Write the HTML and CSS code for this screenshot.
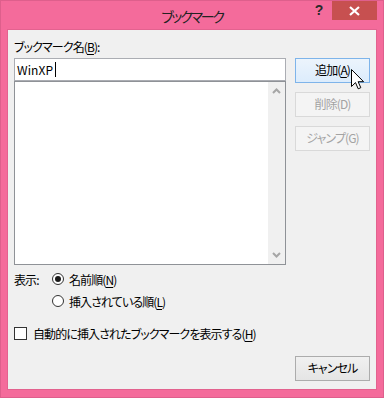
FILE: index.html
```html
<!DOCTYPE html>
<html lang="ja">
<head>
    <meta charset="UTF-8">
    <title>ブックマーク</title>
    <link rel="stylesheet" href="styles.css">
</head>
<body>

    <div class="window">
        <!-- Title bar -->
        <div class="titlebar">
            <div></div>
            <div class="title">ブックマーク</div>
            <div class="controls">
                <div class="help">?</div>
                <div class="close">
                    <svg width="11" height="10" viewBox="0 0 11 10">
                        <path d="M1 1 L10 9 M10 1 L1 9" stroke="#fff" stroke-width="2.2"/>
                    </svg>
                </div>
            </div>
        </div>

        <div class="client">
            <div class="main">
                <div class="left">
                    <div class="label">ブックマーク名(<u>B</u>):</div>
                    <div class="textbox"><span>WinXP</span><span class="caret"></span></div>
                    <div class="listbox">
                        <div class="list-area"></div>
                        <div class="scrollbar">
                            <svg width="9" height="6" viewBox="0 0 9 6">
                                <path d="M1 5 L4.5 1.5 L8 5" fill="none" stroke="#a6a6a6" stroke-width="2"/>
                            </svg>
                            <svg width="9" height="6" viewBox="0 0 9 6">
                                <path d="M1 1 L4.5 4.5 L8 1" fill="none" stroke="#a6a6a6" stroke-width="2"/>
                            </svg>
                        </div>
                    </div>
                </div>
                <div class="right">
                    <div class="button focused">追加(<u>A</u>)</div>
                    <div class="button disabled">削除(D)</div>
                    <div class="button disabled">ジャンプ(G)</div>
                </div>
            </div>

            <div class="options">
                <div class="opt-label">表示:</div>
                <div class="radio-item">
                    <span class="radio checked"></span>
                    <span>名前順(<u>N</u>)</span>
                </div>
                <div></div>
                <div class="radio-item">
                    <span class="radio"></span>
                    <span>挿入されている順(<u>L</u>)</span>
                </div>
            </div>

            <div class="check-row">
                <span class="checkbox"></span>
                <span>自動的に挿入されたブックマークを表示する(<u>H</u>)</span>
            </div>

            <div class="footer">
                <div class="button">キャンセル</div>
            </div>
        </div>

        <!-- mouse pointer over the Add button -->
        <svg class="pointer" width="14" height="22" viewBox="0 0 14 22">
            <path d="M0.5 0.5 L0.5 17.5 L4.5 13.6 L7.2 19.8 L9.8 18.7 L7.1 12.7 L12.6 12.7 Z" fill="#fff" stroke="#000" stroke-width="1"/>
        </svg>
    </div>

</body>
</html>
```

FILE: styles.css
```css
body {
    margin: 0;
    font-family: "Noto Sans CJK JP", "Noto Sans", sans-serif;
    font-feature-settings: "palt";
    font-size: 12px;
    letter-spacing: -0.9px;
    color: #000;
}
u {
    text-decoration-thickness: 1px;
    text-underline-offset: 2px;
}
.window {
    position: relative;
    width: 384px;
    height: 398px;
    box-sizing: border-box;
    background-color: #f46b9b;
    border: 1px solid #de5f8c;
    display: flex;
    flex-direction: column;
}
.titlebar {
    height: 29px;
    padding: 0 6px;
    display: grid;
    grid-template-columns: 1fr auto 1fr;
}
.title {
    font-size: 14px;
    letter-spacing: -2.2px;
    line-height: 30px;
    color: #222;
}
.controls {
    display: flex;
    justify-content: flex-end;
    align-items: flex-start;
}
.help {
    width: 26px;
    height: 19px;
    line-height: 19px;
    text-align: center;
    font-family: "Liberation Sans", sans-serif;
    font-weight: bold;
    font-size: 14px;
    letter-spacing: 0;
    color: #2a2a2a;
}
.close {
    width: 45px;
    height: 19px;
    background-color: #c75050;
    display: flex;
    align-items: center;
    justify-content: center;
}
.client {
    margin: 0 7px 8px 7px;
    height: 359px;
    background-color: #f0f0f0;
    box-shadow: 0 0 0 1px #e3628f;
    padding: 0 6px;
    display: flex;
    flex-direction: column;
}
.main {
    display: flex;
    gap: 9px;
}
.left {
    width: 272px;
}
.label {
    height: 28px;
    box-sizing: border-box;
    padding-top: 9px;
    line-height: 16px;
}
.textbox {
    height: 23px;
    box-sizing: border-box;
    border: 1px solid #abadb3;
    background: #fff;
    padding-left: 2px;
    line-height: 20px;
    letter-spacing: 0.1px;
    display: flex;
    align-items: center;
}
.caret {
    width: 1px;
    height: 15px;
    background: #000;
    margin-left: 2px;
}
.listbox {
    height: 184px;
    box-sizing: border-box;
    border: 1px solid #8f9297;
    display: flex;
}
.list-area {
    flex: 1;
    background: #fff;
}
.scrollbar {
    width: 17px;
    background: #f0f0f0;
    display: flex;
    flex-direction: column;
    justify-content: space-between;
    align-items: center;
    padding: 6px 0;
}
.right {
    width: 75px;
    padding-top: 28px;
    display: flex;
    flex-direction: column;
    gap: 9px;
}
.button {
    height: 25px;
    box-sizing: border-box;
    border: 1px solid #acacac;
    background: linear-gradient(#f0f0f0, #e5e5e5);
    text-align: center;
    line-height: 22px;
}
.button.focused {
    border-color: #7eb4ea;
    background: linear-gradient(#ecf4fc, #dcecfc);
}
.button.disabled {
    border-color: #d9d9d9;
    background: #f4f4f4;
    color: #a3a3a3;
}
.options {
    margin-top: 3px;
    display: grid;
    grid-template-columns: 38px auto;
    grid-auto-rows: 22px;
    align-items: center;
}
.radio-item {
    display: flex;
    align-items: center;
    gap: 5px;
}
.radio {
    width: 12px;
    height: 12px;
    box-sizing: border-box;
    border: 1px solid #333;
    border-radius: 50%;
    background: #fff;
    display: flex;
    align-items: center;
    justify-content: center;
}
.radio.checked::after {
    content: "";
    width: 6px;
    height: 6px;
    border-radius: 50%;
    background: #1a1a1a;
}
.check-row {
    margin-top: 10px;
    height: 22px;
    display: flex;
    align-items: center;
    gap: 6px;
}
.checkbox {
    width: 13px;
    height: 13px;
    box-sizing: border-box;
    border: 1px solid #333;
    background: #fff;
}
.footer {
    margin-top: 12px;
    display: flex;
    justify-content: flex-end;
}
.footer .button {
    width: 75px;
}
.pointer {
    position: absolute;
    left: 350px;
    top: 68px;
}
```
